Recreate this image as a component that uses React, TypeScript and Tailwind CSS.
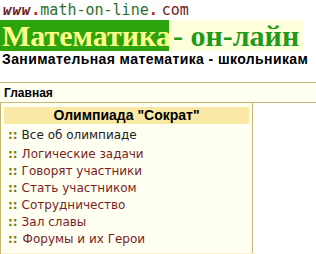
import React from "react";

const items: { text: string; gap: string }[] = [
  { text: "Логические задачи", gap: "" },
  { text: "Говорят участники", gap: "" },
  { text: "Стать участником", gap: "" },
  { text: "Сотрудничество", gap: "" },
  { text: "Зал славы", gap: "pl-[3px]" },
  { text: "Форумы и их Герои", gap: "pl-[5px]" },
];

export default function App() {
  return (
    <div className="w-[316px] h-[254px] bg-white overflow-hidden">
      <div
        className="h-[20px] pl-[3px] flex items-center leading-[16px] overflow-hidden"
        style={{ fontFamily: '"DejaVu Sans Mono", monospace' }}
      >
        <span className="text-[#6b1a1a] text-[14px] font-bold italic tracking-[1px]">www</span>
        <span className="text-[#c01818] text-[15px] font-bold">.</span>
        <span className="text-[#2d6e2d] text-[15px]">math-on-line</span>
        <span className="text-[#c01818] text-[15px] font-bold">.</span>
        <span className="text-[#6b1a1a] text-[15px] ml-[4px]">com</span>
      </div>
      <div className="flex h-[31px] items-stretch" style={{ fontFamily: '"Liberation Serif", serif' }}>
        <div className="bg-[#2ca50c] w-[169px] pl-[2px] flex items-center text-[30px] font-bold text-[#ffff8c] leading-none">
          Математика
        </div>
        <div className="bg-[#ffffdc] w-[134px] pl-[4px] flex items-center text-[30px] font-bold text-[#1f9a1a] leading-none">
          - он-лайн
        </div>
      </div>
      <div
        className="h-[31px] pl-[2px] text-[14px] font-bold text-black leading-[17px] tracking-[0.4px]"
        style={{ fontFamily: '"Liberation Sans", Arial, sans-serif' }}
      >
        Занимательная математика - школьникам
      </div>
      <div
        className="border-t border-b border-[#c8b878] bg-[#fffff2] h-[21px] pl-[4px] flex items-center text-[12px] font-bold text-black"
        style={{ fontFamily: '"Liberation Sans", Arial, sans-serif' }}
      >
        Главная
      </div>
      <div className="w-[253px] border-l border-r border-[#c8b878] bg-[#fffff2] h-[200px] px-[3px] pt-[4px]">
        <div
          className="bg-[#f9e8a6] h-[17px] flex items-center justify-center text-[14px] font-bold text-black"
          style={{ fontFamily: '"Liberation Sans", Arial, sans-serif' }}
        >
          Олимпиада "Сократ"
        </div>
        <div className="text-[12px] leading-[17px] pl-[4px]" style={{ fontFamily: '"DejaVu Sans", Verdana, sans-serif' }}>
          <div className="mt-[3px] mb-[2px] flex">
            <span className="text-[#7a7a20] font-bold">::</span>
            <span className="text-[#222] pl-[4px]">Все об олимпиаде</span>
          </div>
          {items.map((it) => (
            <div key={it.text} className="flex">
              <span className="text-[#7a7a20] font-bold">::</span>
              <span className={`text-[#7a1e1e] pl-[4px] ${it.gap}`}>{it.text}</span>
            </div>
          ))}
          <div className="mt-[5px] -mx-[7px] h-[12px] bg-[#fbf3c8]" />
        </div>
      </div>
    </div>
  );
}
